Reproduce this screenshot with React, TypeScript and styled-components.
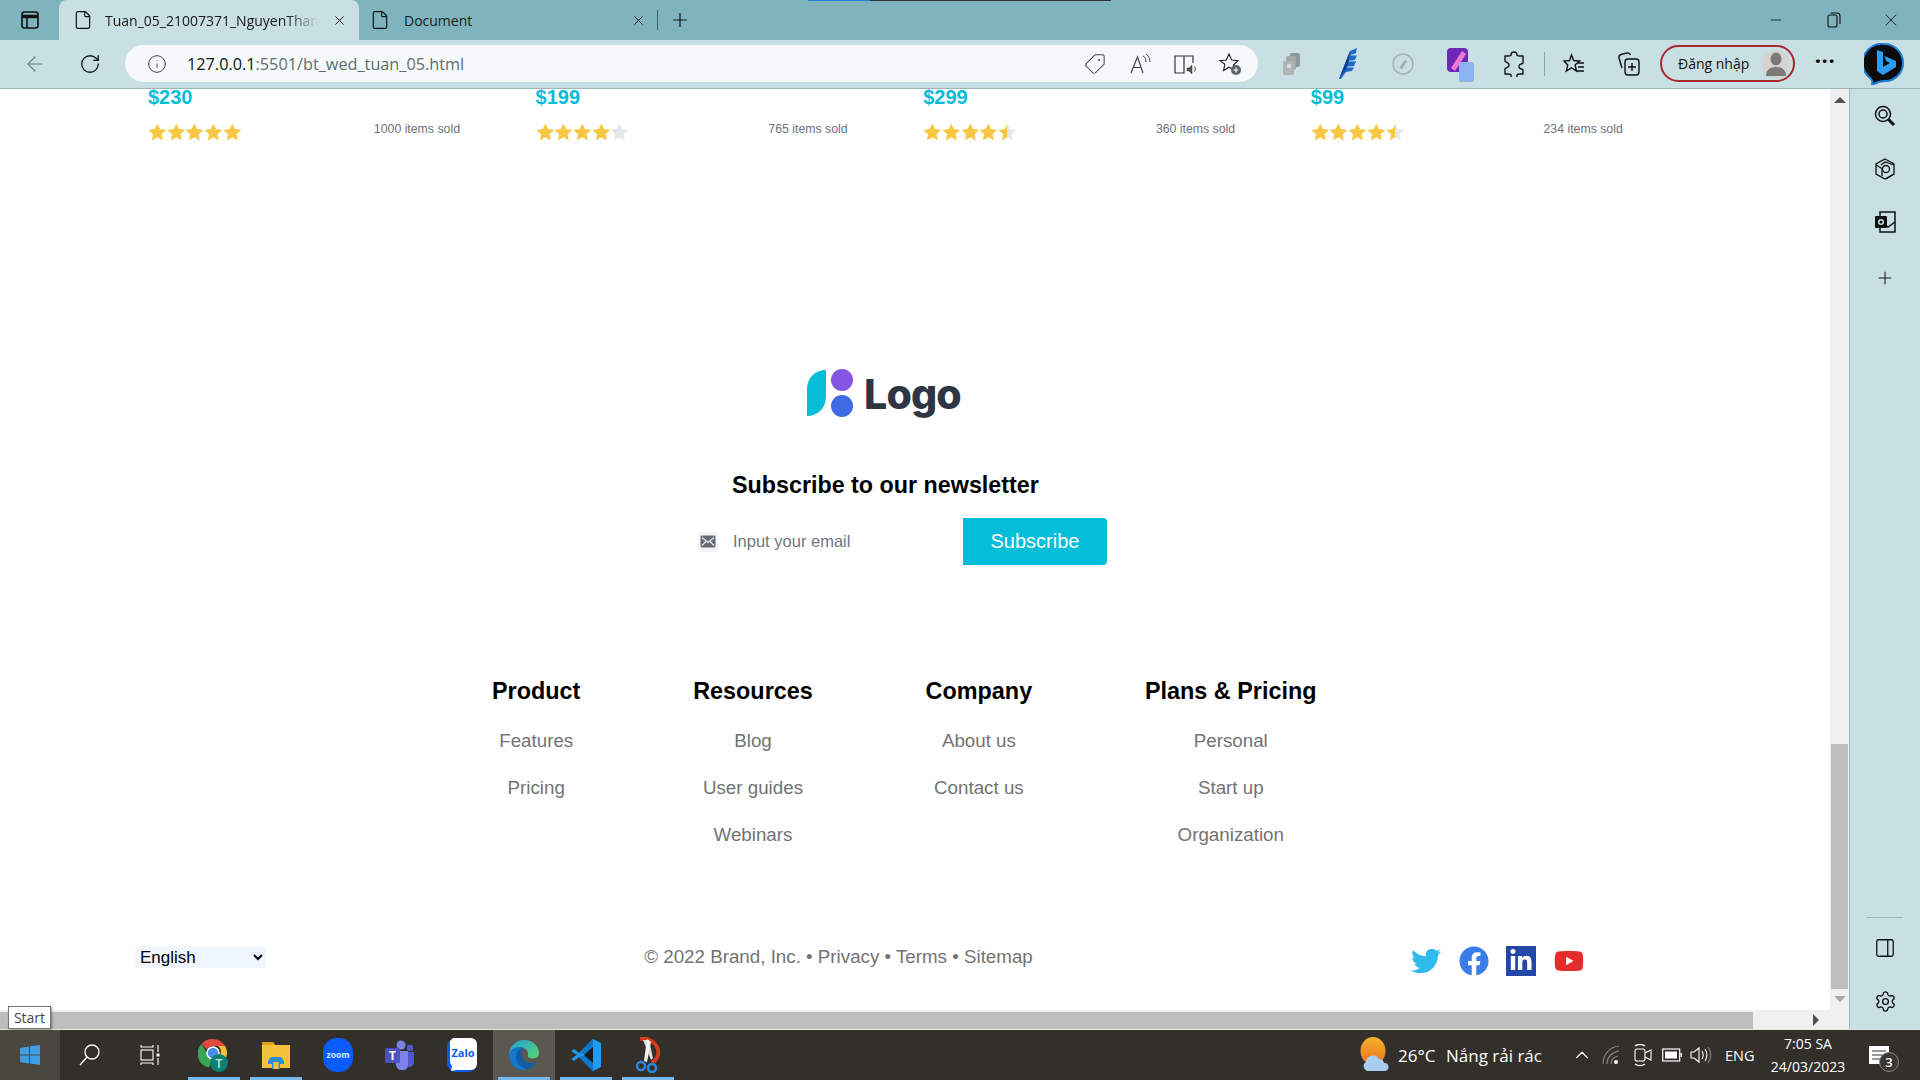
import React from "react";
import styled, { createGlobalStyle } from "styled-components";
import {
  ArrowLeft,
  RotateCw,
  Info,
  Tag,
  File,
  X,
  Plus,
  Minus,
  ChevronUp,
  Settings,
  PanelRight,
} from "lucide-react";
import { FaTwitter, FaFacebook, FaLinkedinIn, FaYoutube } from "react-icons/fa";

const GlobalStyle = createGlobalStyle`
  html, body {
    margin: 0;
    padding: 0;
    width: 1920px;
    height: 1080px;
    overflow: hidden;
    background: #fff;
    font-family: "Liberation Sans", Arial, sans-serif;
  }
`;

const UI_FONT = `"Open Sans", "Noto Sans", sans-serif`;

const products = [
  { price: "$230", rating: 5, sold: "1000 items sold" },
  { price: "$199", rating: 4, sold: "765 items sold" },
  { price: "$299", rating: 4.5, sold: "360 items sold" },
  { price: "$99", rating: 4.5, sold: "234 items sold" },
];

const footerColumns = [
  { title: "Product", links: ["Features", "Pricing"] },
  { title: "Resources", links: ["Blog", "User guides", "Webinars"] },
  { title: "Company", links: ["About us", "Contact us"] },
  { title: "Plans & Pricing", links: ["Personal", "Start up", "Organization"] },
];

const Screen = styled.div`
  width: 1920px;
  height: 1080px;
  display: flex;
  flex-direction: column;
  overflow: hidden;
`;

/* ---- browser chrome ---- */

const TabBar = styled.div`
  position: relative;
  height: 40px;
  flex: none;
  display: flex;
  align-items: stretch;
  background: #7fb4be;
  font-family: ${UI_FONT};
  color: #1a1a1a;
`;

const LoadLine = styled.div`
  position: absolute;
  top: 0;
  left: 808px;
  width: 303px;
  height: 1px;
  background: linear-gradient(90deg, #1d7fd8 0 62px, #333 62px);
`;

const Slot = styled.div<{ $w: number; $ml?: number }>`
  width: ${(p) => p.$w}px;
  margin-left: ${(p) => p.$ml ?? 0}px;
  flex: none;
  display: flex;
  align-items: center;
  justify-content: center;
`;

const Tab = styled.div<{ $active?: boolean; $w: number }>`
  width: ${(p) => p.$w}px;
  flex: none;
  display: flex;
  align-items: center;
  padding-left: ${(p) => (p.$active ? 14 : 11)}px;
  box-sizing: border-box;
  background: ${(p) => (p.$active ? "#c8dfe3" : "transparent")};
  border-radius: ${(p) => (p.$active ? "8px 8px 0 0" : "0")};
  font-size: 14px;
`;

const TabTitle = styled.span<{ $fade?: boolean }>`
  flex: 1;
  margin-left: ${(p) => (p.$fade ? 12 : 14)}px;
  white-space: nowrap;
  overflow: hidden;
  ${(p) =>
    p.$fade &&
    "-webkit-mask-image: linear-gradient(90deg, #000 85%, transparent 100%);"}
`;

const TabDivider = styled.div`
  width: 1px;
  height: 20px;
  align-self: center;
  background: #47666c;
  margin-left: 5px;
`;

const WindowControls = styled.div`
  margin-left: auto;
  display: flex;
`;

const ToolBar = styled.div`
  height: 49px;
  flex: none;
  box-sizing: border-box;
  padding: 5px 0 6px 12px;
  display: flex;
  align-items: stretch;
  background: #c8dfe3;
  border-bottom: 1px solid #9db4b9;
  font-family: ${UI_FONT};
`;

const AddressPill = styled.div`
  width: 1133px;
  flex: none;
  margin-left: 3px;
  box-sizing: border-box;
  padding: 0 6px 0 14px;
  display: flex;
  align-items: center;
  background: #f6f9fa;
  border-radius: 19px;
`;

const UrlText = styled.div`
  flex: 1;
  margin-left: 12px;
  font-size: 16.25px;
  color: #5f6c70;
  b {
    font-weight: 400;
    color: #111;
  }
`;

const ToolDivider = styled.div`
  width: 1px;
  height: 24px;
  background: #8fa5a9;
`;

const SignIn = styled.div`
  width: 135px;
  flex: none;
  box-sizing: border-box;
  margin-left: 6px;
  padding: 0 3px 0 16px;
  display: flex;
  align-items: center;
  justify-content: space-between;
  border: 2px solid #a8282f;
  border-radius: 19px;
  font-size: 14px;
  color: #111;
`;

const Avatar = styled.div`
  width: 28px;
  height: 28px;
  border-radius: 50%;
  background: #d5d3d0;
  display: flex;
  align-items: center;
  justify-content: center;
`;

const Dots = styled.span`
  font-size: 22px;
  line-height: 22px;
  letter-spacing: 0.5px;
  margin-top: -8px;
  font-weight: 700;
`;

/* ---- middle: page + side bar ---- */

const Middle = styled.div`
  flex: 1;
  min-height: 0;
  display: flex;
`;

const BrowserColumn = styled.div`
  flex: 1;
  min-width: 0;
  display: flex;
  flex-direction: column;
  border-right: 1px solid #9db4b9;
`;

const ViewRow = styled.div`
  flex: 1;
  min-height: 0;
  display: flex;
`;

const PageArea = styled.main`
  flex: 1;
  min-width: 0;
  background: #fff;
  overflow: hidden;
  display: flex;
  flex-direction: column;
`;

const VScroll = styled.div`
  width: 19px;
  flex: none;
  background: #f0f0f0;
  display: flex;
  flex-direction: column;
  align-items: center;
`;

const ArrowBox = styled.div<{ $h: number }>`
  height: ${(p) => p.$h}px;
  flex: none;
  display: flex;
  align-items: center;
  justify-content: center;
`;

const TriUp = styled.div<{ $muted?: boolean }>`
  width: 0;
  height: 0;
  border-left: 6px solid transparent;
  border-right: 6px solid transparent;
  border-bottom: 6px solid ${(p) => (p.$muted ? "#a8a8a8" : "#505050")};
`;

const TriDown = styled(TriUp)`
  transform: rotate(180deg);
`;

const TriRight = styled.div`
  width: 0;
  height: 0;
  border-top: 6px solid transparent;
  border-bottom: 6px solid transparent;
  border-left: 6px solid #505050;
`;

const VThumb = styled.div`
  width: 17px;
  height: 245px;
  margin-top: 633px;
  flex: none;
  background: #bdbdbd;
`;

const HScroll = styled.div`
  height: 19px;
  flex: none;
  background: #f0f0f0;
  display: flex;
  align-items: center;
  border-top: 1px solid #f0f0f0;
  box-sizing: border-box;
`;

const HThumb = styled.div`
  width: 1753px;
  height: 17px;
  flex: none;
  background: #bdbdbd;
`;

const HArrow = styled.div`
  margin-left: 60px;
`;

const SideBar = styled.aside`
  width: 70px;
  flex: none;
  background: #c8dfe3;
  display: flex;
  flex-direction: column;
  align-items: center;
  padding: 6px 0 5px;
  box-sizing: border-box;
`;

const SideSlot = styled.div<{ $h: number }>`
  height: ${(p) => p.$h}px;
  flex: none;
  display: flex;
  align-items: center;
  justify-content: center;
`;

const SideRule = styled.div`
  width: 36px;
  height: 1px;
  background: #9db4b9;
  margin-top: auto;
`;

/* ---- page content ---- */

const ProductRow = styled.section`
  display: flex;
  gap: 75.6px;
  padding-left: 148px;
  flex: none;
`;

const ProductCard = styled.article`
  width: 312px;
  flex: none;
`;

const Price = styled.div`
  font-size: 20px;
  line-height: 16px;
  font-weight: 700;
  color: #04bdd8;
`;

const ProductMeta = styled.div`
  margin-top: 18px;
  display: flex;
  align-items: flex-start;
  justify-content: space-between;
`;

const Stars = styled.div`
  display: flex;
  gap: 0;
`;

const Sold = styled.span`
  font-size: 12.3px;
  line-height: 14px;
  margin-top: -1px;
  color: #6b7280;
`;

const LogoRow = styled.div`
  margin: 228px 0 0 807px;
  display: flex;
  align-items: center;
  gap: 6px;
  height: 50px;
`;

const LogoText = styled.span`
  font-family: Inter, sans-serif;
  font-size: 41px;
  font-weight: 800;
  line-height: 48px;
  letter-spacing: -0.8px;
  color: #2f3542;
`;

const NewsTitle = styled.h2`
  margin: 51px 0 0 732px;
  font-size: 23.3px;
  line-height: 30px;
  font-weight: 700;
  color: #000;
`;

const SubscribeForm = styled.form`
  margin: 18px 0 0 698px;
  display: flex;
  align-items: center;
`;

const MailBox = styled.div`
  width: 20px;
  height: 20px;
  flex: none;
  background: #f3f4f6;
  display: flex;
  align-items: center;
  justify-content: center;
`;

const EmailInput = styled.input`
  width: 230px;
  margin-left: 15px;
  flex: none;
  border: 0;
  outline: 0;
  padding: 0;
  font: 16.5px "Liberation Sans", sans-serif;
  color: #333;
  background: transparent;
  &::placeholder {
    color: #6f7682;
    opacity: 1;
  }
`;

const SubscribeButton = styled.button`
  width: 144px;
  height: 47px;
  border: 0;
  padding: 0;
  background: #04bdd8;
  color: #fff;
  font: 20px "Liberation Sans", sans-serif;
  border-radius: 0 4px 4px 0;
`;

const FooterColumns = styled.nav`
  margin: 112px 0 0 492px;
  display: flex;
  gap: 112.8px;
`;

const FooterColumn = styled.div`
  display: flex;
  flex-direction: column;
  align-items: center;
`;

const FooterHeading = styled.h3`
  margin: 0 0 12px;
  font-size: 23.4px;
  line-height: 28px;
  font-weight: 700;
  color: #000;
  white-space: nowrap;
`;

const FooterLink = styled.a`
  height: 47px;
  line-height: 47px;
  font-size: 18.75px;
  color: #737373;
  white-space: nowrap;
`;

const BottomRow = styled.div`
  width: 1449px;
  margin: 88px 0 0 135px;
  display: flex;
  justify-content: space-between;
  align-items: flex-start;
`;

const LangSelect = styled.select`
  width: 131px;
  height: 22px;
  border: 0;
  outline: 0;
  padding: 0 0 0 1px;
  background: #eff6ff;
  color: #000;
  font: 17px "Liberation Sans", sans-serif;
`;

const Copyright = styled.div`
  font-size: 18.75px;
  line-height: 21px;
  color: #737373;
`;

const Socials = styled.div`
  width: 173px;
  height: 30px;
  display: flex;
  justify-content: space-between;
  align-items: center;
`;

const LinkedInBox = styled.div`
  width: 30px;
  height: 30px;
  background: #2348a8;
  display: flex;
  align-items: center;
  justify-content: center;
`;

/* ---- taskbar ---- */

const Taskbar = styled.footer`
  position: relative;
  height: 51px;
  flex: none;
  display: flex;
  align-items: stretch;
  background: #332f2a;
  color: #fff;
  font-family: ${UI_FONT};
  border-top: 1px solid #e8e8e8;
  box-sizing: border-box;
`;

const StartTip = styled.div`
  position: absolute;
  left: 8px;
  top: -24px;
  width: 43px;
  height: 23px;
  box-sizing: border-box;
  background: #fff;
  border: 1px solid #767676;
  box-shadow: 1px 1px 2px rgba(0, 0, 0, 0.4);
  color: #444;
  font-size: 14px;
  line-height: 21px;
  text-align: center;
`;

const BarButton = styled.div<{ $w: number; $ml?: number; $bg?: string; $open?: boolean }>`
  position: relative;
  width: ${(p) => p.$w}px;
  margin-left: ${(p) => p.$ml ?? 0}px;
  flex: none;
  display: flex;
  align-items: center;
  justify-content: center;
  background: ${(p) => p.$bg ?? "transparent"};
  &::after {
    content: "";
    display: ${(p) => (p.$open ? "block" : "none")};
    position: absolute;
    left: 5px;
    right: 5px;
    bottom: 0;
    height: 3px;
    background: #76b9ed;
  }
`;

const BarText = styled.span<{ $w: number; $ml: number; $size?: number }>`
  width: ${(p) => p.$w}px;
  margin-left: ${(p) => p.$ml}px;
  flex: none;
  align-self: center;
  font-size: ${(p) => p.$size ?? 16}px;
  white-space: nowrap;
`;

const TaskSpacer = styled.div`
  flex: 1;
`;

const Clock = styled.div`
  width: 88px;
  margin-left: 10px;
  flex: none;
  display: flex;
  flex-direction: column;
  align-items: center;
  justify-content: center;
  gap: 3px;
  font-size: 14px;
  line-height: 20px;
`;

const Badge = styled.div`
  position: absolute;
  left: 27px;
  top: 22px;
  width: 20px;
  height: 20px;
  box-sizing: border-box;
  border-radius: 50%;
  background: #3a3632;
  border: 1px solid #8a8780;
  font-size: 13px;
  font-weight: 600;
  line-height: 18px;
  text-align: center;
`;

/* ---- drawings ---- */

const STAR_PATH =
  "M9.35 .4l2.7 5.7 6.2.8-4.6 4.300 1.2 6.200-5.500-3.100-5.500 3.100 1.200-6.200L.45 6.900l6.200-.8z";

const StarIcon: React.FC<{ fill: "full" | "half" | "empty"; id: string }> = ({ fill, id }) => (
  <svg width="18.7" height="18" viewBox="0 0 18.7 18">
    <defs>
      <linearGradient id={id}>
        <stop offset="50%" stopColor="#f8c845" />
        <stop offset="50%" stopColor="#e5e7eb" />
      </linearGradient>
    </defs>
    <path
      d={STAR_PATH}
      fill={fill === "full" ? "#f8c845" : fill === "empty" ? "#e5e7eb" : `url(#${id})`}
    />
  </svg>
);

const Rating: React.FC<{ value: number; name: string }> = ({ value, name }) => (
  <Stars>
    {[1, 2, 3, 4, 5].map((n) => (
      <StarIcon
        key={n}
        id={`${name}-${n}`}
        fill={value >= n ? "full" : value >= n - 0.5 ? "half" : "empty"}
      />
    ))}
  </Stars>
);

const LogoMark = () => (
  <svg width="51" height="50" viewBox="0 0 51 50">
    <path d="M19 1v26c0 12-8 20-19 20V20C0 9 8 1 19 1z" fill="#04bdd8" />
    <circle cx="35" cy="11" r="11" fill="#8656e0" />
    <circle cx="35" cy="37" r="11" fill="#4069e5" />
  </svg>
);

const TabsIcon = () => (
  <svg width="20" height="20" viewBox="0 0 20 20" fill="none" stroke="#111" strokeWidth="1.6">
    <rect x="2" y="2" width="16" height="16" rx="2.5" />
    <path d="M2 6.500h16" strokeWidth="3.500" />
    <path d="M7 6.500V18" />
  </svg>
);

const RestoreIcon = () => (
  <svg width="14" height="16" viewBox="0 0 14 16" fill="none" stroke="#111" strokeWidth="1.100">
    <rect x="1" y="3" width="9" height="12" rx="2" />
    <path d="M3.500 1H10a3 3 0 0 1 3 3v8" />
  </svg>
);

const ReadAloudIcon = () => (
  <svg width="24" height="24" viewBox="0 0 24 24" fill="none" stroke="#444" strokeWidth="1.200">
    <path d="M3 21L9.500 5 15 21M5.500 15.500h8" />
    <path d="M15 4c2 1 3 3 3 6M18 2c3 2 4 5 4 8" strokeWidth="1" />
  </svg>
);

const ImmersiveIcon = () => (
  <svg width="24" height="24" viewBox="0 0 24 24" fill="none" stroke="#333" strokeWidth="1.200">
    <path d="M2 4h9v17H2zM11 4h9v7" />
    <path d="M14 16h2l3-3v9l-3-3h-2z" fill="#555" strokeWidth="0.500" />
    <path d="M21.500 14.500c1 1.500 1 3.500 0 5" strokeWidth="1" />
  </svg>
);

const StarPlusIcon = () => (
  <svg width="24" height="24" viewBox="0 0 24 24" fill="none" stroke="#222" strokeWidth="1.200">
    <path d="M11 2l2.700 6 6.300.7-4.600 4.300 1 5-5.400-2.800-5.400 3.300 1.200-6.200L2 8.700 8.300 8z" />
    <circle cx="18" cy="18" r="5" fill="#5a6164" stroke="none" />
    <path d="M18 15.500v5M15.500 18h5" stroke="#fff" strokeWidth="1.200" />
  </svg>
);

const CollectionsGrey = () => (
  <svg width="22" height="24" viewBox="0 0 22 24">
    <rect x="9" y="1" width="10" height="14" rx="2" fill="#8d9a9d" />
    <rect x="5" y="4" width="10" height="14" rx="2" fill="#a3a8a9" />
    <rect x="2" y="9" width="11" height="14" rx="1.500" fill="#b2b5b5" />
    <circle cx="8" cy="14" r="2.200" fill="#d8dcdc" />
  </svg>
);

const QuillIcon = () => (
  <svg width="24" height="32" viewBox="0 0 24 32">
    <path d="M2 31L13 3l7-3-1 5-4 2h5l-2 5-4 1h5l-2 5-5 1h5l-2 4-6 1-5 7z" fill="#1b6bc9" />
    <path d="M2 31L13 3l-2 15z" fill="#0f3f8f" />
    <path d="M14 7h6M12 13h6M10 19h6" stroke="#c8dfe3" strokeWidth="1" />
  </svg>
);

const CompassGrey = () => (
  <svg width="22" height="22" viewBox="0 0 22 22" fill="none">
    <circle cx="11" cy="11" r="10" stroke="#a7b0b1" strokeWidth="1.500" />
    <path d="M7 15l6-8 2 1-5 8z" fill="#a3a9aa" />
  </svg>
);

const PurpleExtension = () => (
  <svg width="30" height="36" viewBox="0 0 30 36">
    <rect x="1" y="2" width="21" height="24" rx="4" fill="#6d28b8" />
    <path d="M5 22L16 5l4 3L9 25z" fill="#ee7bd0" />
    <rect x="13" y="16" width="15" height="20" rx="2.500" fill="#8ab4f0" />
  </svg>
);

const PuzzleIcon = () => (
  <svg width="22" height="26" viewBox="0 0 22 26" fill="none" stroke="#111" strokeWidth="1.400" strokeLinejoin="round">
    <path d="M8 4a3 3 0 0 1 6 0c0 .8 1 1 3 1h3v7c0 1-2 .5-3 1.500a2.500 2.500 0 0 0 0 4c1 1 3 .5 3 1.500v4h-3c-2 0-3 .5-3 1.500a3 3 0 0 1-6-.5c0-1-1-1-3-1H2v-5c0-1 2-1 3-2a2.500 2.500 0 0 0 0-4c-1-1-3-1-3-2V5h3c2 0 3-.2 3-1z" />
  </svg>
);

const FavoritesIcon = () => (
  <svg width="24" height="24" viewBox="0 0 24 24" fill="none" stroke="#111" strokeWidth="1.400">
    <path d="M9.500 3l2.200 5.500 6 .5-4.600 4 1.400 6-5-3.200-5.200 3.200 1.500-6L2 9l5.500-.5z" />
    <path d="M16 11h6M16 15h6M15 19h7" />
  </svg>
);

const CollectionsIcon = () => (
  <svg width="24" height="26" viewBox="0 0 24 26" fill="none" stroke="#111" strokeWidth="1.400">
    <path d="M5 17L2 7c-.5-2 .5-3 2-3.500L10 2c2-.4 3 .5 3.500 2" />
    <rect x="8" y="8" width="14" height="16" rx="3" />
    <path d="M15 12v8M11 16h8" />
  </svg>
);

const UserGlyph = () => (
  <svg width="20" height="24" viewBox="0 0 20 24" fill="#7c7a77">
    <ellipse cx="10" cy="7" rx="5.500" ry="6.500" />
    <path d="M0 24c0-6 4-9 10-9s10 3 10 9z" />
  </svg>
);

const BingLogo = () => (
  <svg width="40" height="42" viewBox="0 0 40 42">
    <path d="M20 1a19 19 0 0 1 19 19c0 10-8 18-18 18-5 0-8 1-13 4 1-3 0-6-3-8A19 19 0 0 1 20 1z" fill="#0b0b0b" stroke="#1c7ed6" strokeWidth="2" />
    <path d="M13 7l6 2v15l7-4-4-2-1.500-5L32 18v6l-13 8-6-4z" fill="#2b9df4" />
  </svg>
);

const SideSearchIcon = () => (
  <svg width="22" height="22" viewBox="0 0 22 22" fill="none" stroke="#111" strokeWidth="1.500">
    <circle cx="9" cy="9" r="7.500" />
    <circle cx="9" cy="9" r="4" />
    <path d="M14.500 14.500l5.500 5.500" strokeWidth="3" />
  </svg>
);

const M365Icon = () => (
  <svg width="22" height="22" viewBox="0 0 22 22" fill="none" stroke="#111" strokeWidth="1.300">
    <path d="M11 1l9 5v10l-9 5-9-5V6z" />
    <path d="M2 7l6 3.500V18M20 7l-9-3-4 3M12 21l8-5" />
    <circle cx="12" cy="11" r="3.500" />
  </svg>
);

const OutlookIcon = () => (
  <svg width="22" height="22" viewBox="0 0 22 22">
    <path d="M6 1h15v20H6z" fill="none" stroke="#111" strokeWidth="1.500" />
    <path d="M6 11l8 5 7-5" fill="none" stroke="#111" strokeWidth="1.500" />
    <rect x="1" y="5" width="12" height="12" rx="1" fill="#111" />
    <circle cx="7" cy="11" r="3" fill="#c8dfe3" />
    <circle cx="7" cy="11" r="1.500" fill="#111" />
  </svg>
);

const MailGlyph = () => (
  <svg width="16" height="13" viewBox="0 0 16 13">
    <rect x="0.500" y="0.500" width="15" height="12" rx="1.500" fill="#666b73" />
    <path d="M2 2.500l6 5 6-5M2 10.500l4-4M14 10.500l-4-4" fill="none" stroke="#e5e7eb" strokeWidth="1.200" />
  </svg>
);

const WindowsLogo = () => (
  <svg width="20" height="20" viewBox="0 0 20 20" fill="#3f9de4">
    <path d="M0 3l9-1.500v8H0zM10 1.300L20 0v9.500H10zM0 10.500h9v8L0 17zM10 10.500h10V20l-10-1.500z" />
  </svg>
);

const SearchGlyph = () => (
  <svg width="22" height="22" viewBox="0 0 22 22" fill="none" stroke="#fff" strokeWidth="1.300">
    <circle cx="13" cy="8" r="7" />
    <path d="M8 13l-7 8" />
  </svg>
);

const TaskViewGlyph = () => (
  <svg width="20" height="20" viewBox="0 0 20 20" fill="none" stroke="#fff" strokeWidth="1.100">
    <path d="M1 0v2h12V0M1 20v-2h12v2" />
    <rect x="1" y="5" width="12" height="10" />
    <path d="M18 0v7M18 13v7" />
    <rect x="16.500" y="8.500" width="3" height="3" fill="#fff" stroke="none" />
  </svg>
);

const ChromeLogo = () => (
  <svg width="32" height="34" viewBox="0 0 32 34">
    <path d="M15 1a14 14 0 0 1 12.100 7H15a7 7 0 0 0-6 3.500L3.500 6A14 14 0 0 1 15 1z" fill="#e2483d" />
    <path d="M3.500 6L9 15a7 7 0 0 0 5 6.500l-3 8A14 14 0 0 1 3.500 6z" fill="#3aa655" />
    <path d="M27 8a14 14 0 0 1-13 21l5-9a7 7 0 0 0 1-12z" fill="#f6c235" />
    <circle cx="15" cy="15" r="6" fill="#4a8ce8" stroke="#fff" strokeWidth="1.500" />
    <circle cx="21" cy="25" r="9" fill="#0b8174" />
    <text x="21" y="30" fontSize="13" fontFamily="Open Sans" fontWeight="600" fill="#b8e6dd" textAnchor="middle">T</text>
  </svg>
);

const FolderLogo = () => (
  <svg width="28" height="30" viewBox="0 0 28 30">
    <path d="M0 2h11l2 3h15v23H0z" fill="#f5c33b" />
    <path d="M0 2h11l2 3H0z" fill="#e0a21c" />
    <path d="M6 21l3-4h10l3 4v3H6z" fill="#2c8fd6" />
    <rect x="10" y="20" width="8" height="9" fill="#2c8fd6" />
    <rect x="11.500" y="22" width="5" height="7" fill="#f5c33b" />
  </svg>
);

const ZoomLogo = () => (
  <svg width="30" height="34" viewBox="0 0 30 34">
    <rect x="0" y="0" width="30" height="34" rx="14" fill="#0b5cff" />
    <text x="15" y="20" fontSize="8.500" fontWeight="700" fontFamily="Open Sans" fill="#d9e6ff" textAnchor="middle">zoom</text>
  </svg>
);

const TeamsLogo = () => (
  <svg width="30" height="30" viewBox="0 0 30 30">
    <circle cx="16" cy="5" r="4.500" fill="#7b83eb" />
    <circle cx="25" cy="8" r="3.200" fill="#5059c9" />
    <path d="M20 12h9v10a5 5 0 0 1-9 3z" fill="#5059c9" />
    <path d="M9 11h14v13a6 6 0 0 1-12 1z" fill="#7b83eb" />
    <rect x="0" y="8" width="15" height="15" rx="1.500" fill="#4b53bc" />
    <text x="7.500" y="20" fontSize="12" fontWeight="700" fontFamily="Open Sans" fill="#fff" textAnchor="middle">T</text>
  </svg>
);

const ZaloLogo = () => (
  <svg width="30" height="34" viewBox="0 0 30 34">
    <rect x="0" y="0" width="30" height="34" rx="9" fill="#0a5cf0" />
    <path d="M6 0h18a6 6 0 0 1 6 6v20a6 6 0 0 1-6 6H10l-6 1 1-5C3 26 3 24 3 20V3z" fill="#fff" />
    <text x="16" y="19" fontSize="11" fontWeight="700" fontFamily="Open Sans" fill="#0a5cf0" textAnchor="middle">Zalo</text>
  </svg>
);

const EdgeLogo = () => (
  <svg width="32" height="32" viewBox="0 0 32 32">
    <defs>
      <linearGradient id="edgeTop" x1="0" y1="0" x2="1" y2="1">
        <stop offset="0%" stopColor="#1ea2d8" />
        <stop offset="100%" stopColor="#5bd66d" />
      </linearGradient>
    </defs>
    <path d="M16 1c9 0 15 6 15 13 0 5-5 6-9 5-3-.5-2-3-2-4 0-4-4-7-8-7-5 0-9 3-11 7C2 7 8 1 16 1z" fill="url(#edgeTop)" />
    <path d="M1 15c2-5 6-7 10-7 2 0 3 .5 4 1-5 1-7 5-7 9 0 6 5 11 12 12-1 .5-3 1-5 1C7 31 1 24 1 15z" fill="#1577c9" />
    <path d="M8 18c0-4 2-8 7-9-3 4-2 11 3 14 4 2 8 1 11-1-2 4-6 8-9 8-7-1-12-6-12-12z" fill="#0f5da8" />
  </svg>
);

const VsCodeLogo = () => (
  <svg width="30" height="32" viewBox="0 0 30 32">
    <path d="M22 0l8 4v24l-8 4L8 18l-5 4-3-2 6-4-6-4 3-2 5 4z" fill="#1f9cf0" />
    <path d="M22 0v32L8 18l8-2-8-2z" fill="#0b78c9" />
    <path d="M22 8v16l-9-8z" fill="#1a1a1a" />
  </svg>
);

const SnipLogo = () => (
  <svg width="28" height="36" viewBox="0 0 28 36" fill="none">
    <path d="M6 2c10-2 20 6 18 16-1 4-3 6-6 8" stroke="#d33b1d" strokeWidth="4" />
    <path d="M9 3l8 20 2-2-4-18z" fill="#d8d8d8" />
    <path d="M13 2l-3 22 3 1 4-20z" fill="#f2f2f2" />
    <circle cx="7" cy="29" r="4" stroke="#2a8ae0" strokeWidth="2.500" />
    <circle cx="18" cy="31" r="4" stroke="#2a8ae0" strokeWidth="2.500" />
  </svg>
);

const WeatherGlyph = () => (
  <svg width="30" height="36" viewBox="0 0 30 36">
    <defs>
      <linearGradient id="sunFill" x1="0" y1="0" x2="0" y2="1">
        <stop offset="0%" stopColor="#f4b02c" />
        <stop offset="100%" stopColor="#e8761d" />
      </linearGradient>
    </defs>
    <ellipse cx="13" cy="14" rx="12.500" ry="14" fill="url(#sunFill)" />
    <path d="M7 34a5 5 0 0 1-1-9 7 7 0 0 1 13-3 5 5 0 0 1 5 4 4 4 0 0 1 1 8z" fill="#a9cdf0" />
  </svg>
);

const WifiGlyph = () => (
  <svg width="20" height="20" viewBox="0 0 20 20" fill="none" stroke="#8a8780" strokeWidth="1.100">
    <path d="M1 19C1 9 8 2 17 1M5 19c0-7 5-12 12-13M9 19c0-4 3-7 7-8" />
    <circle cx="14" cy="17" r="2" fill="#fff" stroke="none" />
  </svg>
);

const CameraGlyph = () => (
  <svg width="20" height="22" viewBox="0 0 20 22" fill="none" stroke="#fff" strokeWidth="1.100">
    <rect x="2" y="5" width="10" height="12" rx="2" />
    <path d="M12 9l6-3v10l-6-3M2 2c3-2 7-2 10 0M2 20c3 2 7 2 10 0" />
  </svg>
);

const BatteryGlyph = () => (
  <svg width="20" height="14" viewBox="0 0 20 14" fill="none">
    <rect x="0.700" y="1" width="17" height="12" stroke="#fff" strokeWidth="1.200" />
    <rect x="3" y="3.500" width="12" height="7" fill="#fff" />
    <rect x="18.500" y="5" width="1.500" height="4" fill="#fff" />
  </svg>
);

const VolumeGlyph = () => (
  <svg width="22" height="20" viewBox="0 0 22 20" fill="none" stroke="#fff" strokeWidth="1.100">
    <path d="M1 7h3l5-4v14l-5-4H1z" />
    <path d="M12 6c1.500 2.500 1.500 5.500 0 8M15 4c2.500 3.500 2.500 8.500 0 12" />
    <path d="M18 2c3.500 5 3.500 11 0 16" stroke="#8a8780" />
  </svg>
);

const NoteGlyph = () => (
  <svg width="20" height="18" viewBox="0 0 20 18">
    <rect width="20" height="18" fill="#fff" />
    <path d="M3 5h14M3 9h14M3 13h9" stroke="#3a3632" strokeWidth="1.200" />
  </svg>
);

const App: React.FC = () => {
  return (
    <Screen>
      <GlobalStyle />

      <TabBar>
        <LoadLine />
        <Slot $w={59}>
          <TabsIcon />
        </Slot>
        <Tab $active $w={300}>
          <File size={20} strokeWidth={1.4} color="#111" />
          <TabTitle $fade>Tuan_05_21007371_NguyenThanhNhut</TabTitle>
          <Slot $w={40}>
            <X size={15} strokeWidth={1.6} color="#111" />
          </Slot>
        </Tab>
        <Tab $w={293}>
          <File size={20} strokeWidth={1.4} color="#111" />
          <TabTitle>Document</TabTitle>
          <Slot $w={28}>
            <X size={15} strokeWidth={1.6} color="#111" />
          </Slot>
        </Tab>
        <TabDivider />
        <Slot $w={44}>
          <Plus size={22} strokeWidth={1.3} color="#111" />
        </Slot>
        <WindowControls>
          <Slot $w={58}>
            <Minus size={16} strokeWidth={1.2} color="#111" />
          </Slot>
          <Slot $w={57}>
            <RestoreIcon />
          </Slot>
          <Slot $w={58}>
            <X size={20} strokeWidth={1} color="#111" />
          </Slot>
        </WindowControls>
      </TabBar>

      <ToolBar>
        <Slot $w={46}>
          <ArrowLeft size={24} strokeWidth={1.2} color="#6f8084" />
        </Slot>
        <Slot $w={64}>
          <RotateCw size={22} strokeWidth={1.4} color="#111" />
        </Slot>
        <AddressPill>
          <Slot $w={36}>
            <Info size={20} strokeWidth={1.2} color="#444" />
          </Slot>
          <UrlText>
            <b>127.0.0.1</b>:5501/bt_wed_tuan_05.html
          </UrlText>
          <Slot $w={45}>
            <Tag size={22} strokeWidth={1.1} color="#444" style={{ transform: "rotate(90deg)" }} />
          </Slot>
          <Slot $w={45}>
            <ReadAloudIcon />
          </Slot>
          <Slot $w={46}>
            <ImmersiveIcon />
          </Slot>
          <Slot $w={44}>
            <StarPlusIcon />
          </Slot>
        </AddressPill>
        <Slot $w={56} $ml={6}>
          <CollectionsGrey />
        </Slot>
        <Slot $w={58}>
          <QuillIcon />
        </Slot>
        <Slot $w={50}>
          <CompassGrey />
        </Slot>
        <Slot $w={66}>
          <PurpleExtension />
        </Slot>
        <Slot $w={40}>
          <PuzzleIcon />
        </Slot>
        <Slot $w={20}>
          <ToolDivider />
        </Slot>
        <Slot $w={40}>
          <FavoritesIcon />
        </Slot>
        <Slot $w={50} $ml={10}>
          <CollectionsIcon />
        </Slot>
        <SignIn>
          Đăng nhập
          <Avatar>
            <UserGlyph />
          </Avatar>
        </SignIn>
        <Slot $w={60}>
          <Dots>···</Dots>
        </Slot>
        <Slot $w={58}>
          <BingLogo />
        </Slot>
      </ToolBar>

      <Middle>
        <BrowserColumn>
          <ViewRow>
            <PageArea>
              <ProductRow>
                {products.map((item, i) => (
                  <ProductCard key={item.price}>
                    <Price>{item.price}</Price>
                    <ProductMeta>
                      <Rating value={item.rating} name={`p${i}`} />
                      <Sold>{item.sold}</Sold>
                    </ProductMeta>
                  </ProductCard>
                ))}
              </ProductRow>

              <LogoRow>
                <LogoMark />
                <LogoText>Logo</LogoText>
              </LogoRow>

              <NewsTitle>Subscribe to our newsletter</NewsTitle>
              <SubscribeForm>
                <MailBox>
                  <MailGlyph />
                </MailBox>
                <EmailInput placeholder="Input your email" />
                <SubscribeButton type="button">Subscribe</SubscribeButton>
              </SubscribeForm>

              <FooterColumns>
                {footerColumns.map((col) => (
                  <FooterColumn key={col.title}>
                    <FooterHeading>{col.title}</FooterHeading>
                    {col.links.map((link) => (
                      <FooterLink key={link}>{link}</FooterLink>
                    ))}
                  </FooterColumn>
                ))}
              </FooterColumns>

              <BottomRow>
                <LangSelect defaultValue="English">
                  <option>English</option>
                </LangSelect>
                <Copyright>© 2022 Brand, Inc. • Privacy • Terms • Sitemap</Copyright>
                <Socials>
                  <FaTwitter size={30} color="#2dbbee" />
                  <FaFacebook size={30} color="#3b7de8" />
                  <LinkedInBox>
                    <FaLinkedinIn size={24} color="#fff" />
                  </LinkedInBox>
                  <FaYoutube size={30} color="#e62b2b" />
                </Socials>
              </BottomRow>
            </PageArea>
            <VScroll>
              <ArrowBox $h={22}>
                <TriUp />
              </ArrowBox>
              <VThumb />
              <ArrowBox $h={20}>
                <TriDown $muted />
              </ArrowBox>
            </VScroll>
          </ViewRow>
          <HScroll>
            <HThumb />
            <HArrow>
              <TriRight />
            </HArrow>
          </HScroll>
        </BrowserColumn>

        <SideBar>
          <SideSlot $h={42}>
            <SideSearchIcon />
          </SideSlot>
          <SideSlot $h={64}>
            <M365Icon />
          </SideSlot>
          <SideSlot $h={42}>
            <OutlookIcon />
          </SideSlot>
          <SideSlot $h={70}>
            <Plus size={20} strokeWidth={1.2} color="#111" />
          </SideSlot>
          <SideRule />
          <SideSlot $h={60}>
            <PanelRight size={22} strokeWidth={1.4} color="#111" />
          </SideSlot>
          <SideSlot $h={46}>
            <Settings size={23} strokeWidth={1.4} color="#111" />
          </SideSlot>
        </SideBar>
      </Middle>

      <Taskbar>
        <StartTip>Start</StartTip>
        <BarButton $w={60} $bg="#4a4640">
          <WindowsLogo />
        </BarButton>
        <BarButton $w={60}>
          <SearchGlyph />
        </BarButton>
        <BarButton $w={60}>
          <TaskViewGlyph />
        </BarButton>
        <BarButton $w={62} $ml={2.5} $open>
          <ChromeLogo />
        </BarButton>
        <BarButton $w={62} $open>
          <FolderLogo />
        </BarButton>
        <BarButton $w={62}>
          <ZoomLogo />
        </BarButton>
        <BarButton $w={62}>
          <TeamsLogo />
        </BarButton>
        <BarButton $w={62}>
          <ZaloLogo />
        </BarButton>
        <BarButton $w={62} $bg="#5b5852" $open>
          <EdgeLogo />
        </BarButton>
        <BarButton $w={62} $open>
          <VsCodeLogo />
        </BarButton>
        <BarButton $w={62} $open>
          <SnipLogo />
        </BarButton>
        <TaskSpacer />
        <BarButton $w={30}>
          <WeatherGlyph />
        </BarButton>
        <BarText $w={37} $ml={8} $size={17}>
          26°C
        </BarText>
        <BarText $w={96} $ml={11} $size={17}>
          Nắng rải rác
        </BarText>
        <BarButton $w={30} $ml={25}>
          <ChevronUp size={22} strokeWidth={1.2} color="#fff" />
        </BarButton>
        <BarButton $w={30}>
          <WifiGlyph />
        </BarButton>
        <BarButton $w={30} $ml={1}>
          <CameraGlyph />
        </BarButton>
        <BarButton $w={28}>
          <BatteryGlyph />
        </BarButton>
        <BarButton $w={28} $ml={1}>
          <VolumeGlyph />
        </BarButton>
        <BarText $w={29} $ml={10} $size={14.5}>
          ENG
        </BarText>
        <Clock>
          <span>7:05 SA</span>
          <span>24/03/2023</span>
        </Clock>
        <BarButton $w={54}>
          <NoteGlyph />
          <Badge>3</Badge>
        </BarButton>
        <BarButton $w={14} />
      </Taskbar>
    </Screen>
  );
};

export default App;
